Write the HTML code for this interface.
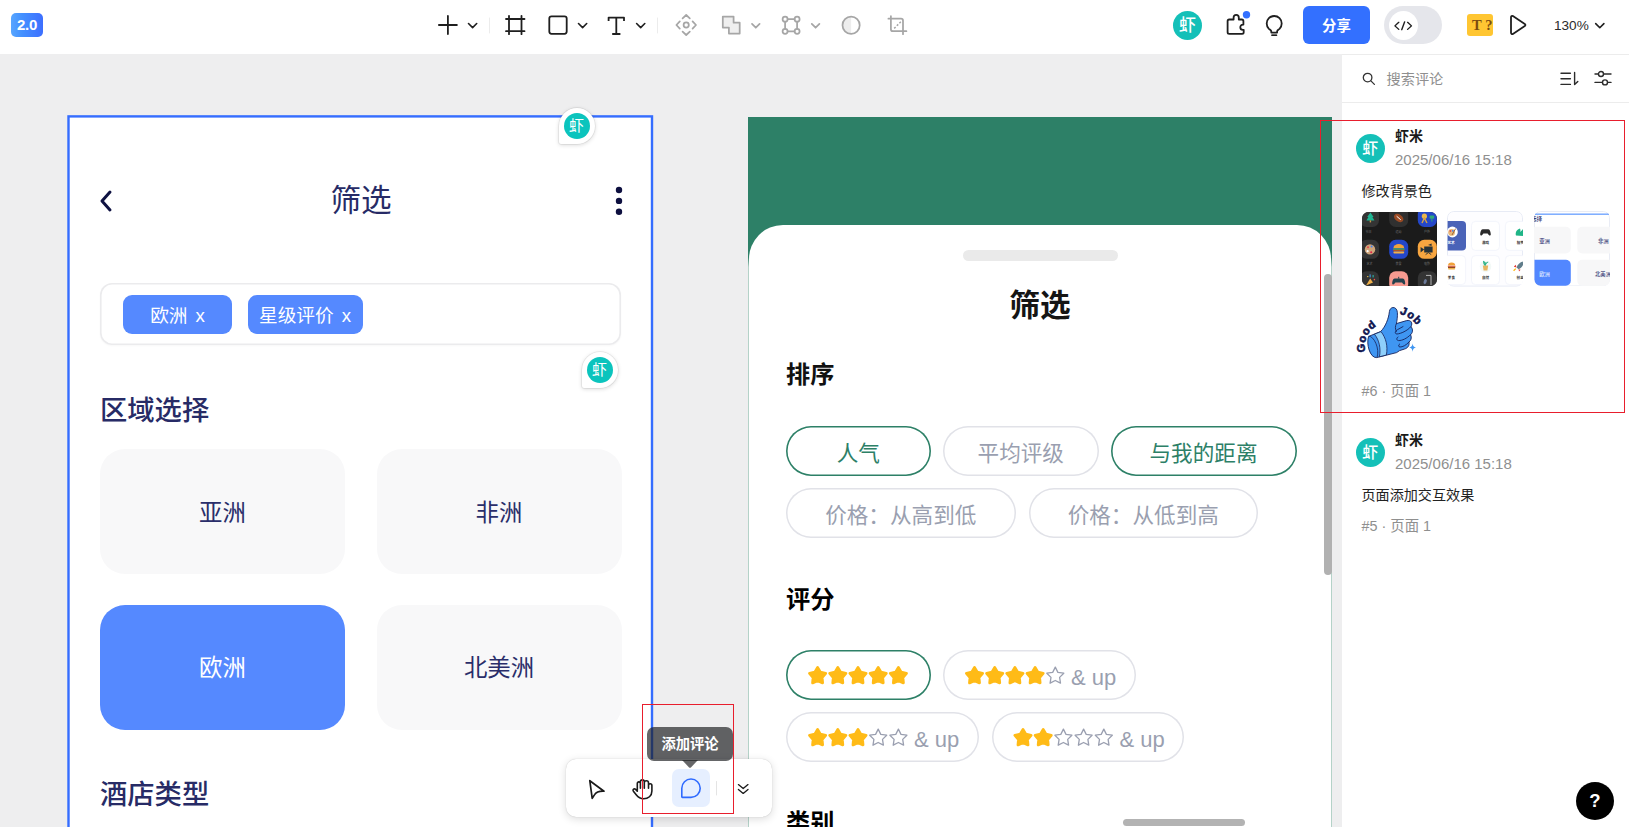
<!DOCTYPE html>
<html lang="zh-CN">
<head>
<meta charset="utf-8">
<title>筛选 - 评论</title>
<style>
*{box-sizing:border-box;margin:0;padding:0}
html,body{width:1629px;height:827px;overflow:hidden;background:#eeeeef}
body{position:relative;font-family:"Liberation Sans","Noto Sans CJK SC",sans-serif;color:#1f1f1f}
.abs{position:absolute}
.t{position:absolute;white-space:nowrap}
svg{position:absolute;overflow:visible}
/* top bar */
#topbar{position:absolute;left:0;top:0;width:1629px;height:54px;background:#fff}
#logo{position:absolute;left:11px;top:13px;width:32px;height:24px;border-radius:5px;background:linear-gradient(90deg,#58a6ff 0%,#4390ff 35%,#3d6fff 100%);color:#fff;font-weight:bold;font-size:15px;line-height:24px;text-align:center;letter-spacing:-0.3px}
/* frames */
#frameL{position:absolute;left:68px;top:116px;width:585px;height:740px;background:#fff}
#frameLb{position:absolute;left:67.5px;top:115.5px;width:586px;height:740px;border:2px solid #3370ff;pointer-events:none}
#frameR{position:absolute;left:748px;top:117px;width:584px;height:720px;background:linear-gradient(#2d8067 0,#2d8067 140px,#b4d2c8 150px,#b4d2c8 100%)}
#sheet{position:absolute;left:749px;top:225px;width:582px;height:620px;background:#fff;border-radius:34px 34px 0 0}
.navy{color:#272b66}
.card{position:absolute;width:245px;height:125px;border-radius:25px;background:#f8f8f9;color:#2a2e6a;font-size:23.4px;text-align:center;line-height:125px}
.card span{position:relative;top:1.5px}
.tag{position:absolute;top:295px;height:39px;border-radius:9px;background:#5589ff;color:#fff;font-size:18.7px;line-height:41px;text-align:center}
.pill{position:absolute;height:49.5px;border-radius:25px;box-shadow:inset 0 0 0 1.5px #e1e2e8;color:#9a9fb0;font-size:21.6px;text-align:center;line-height:49.5px;background:#fff}
.pill.on{box-shadow:inset 0 0 0 1.6px #2d8067;color:#2d8067}
.pill span{position:relative;top:3px}
.h2{position:absolute;left:786px;font-size:24.2px;font-weight:bold;color:#111;line-height:30px}
/* pins */
.pin{position:absolute;width:36px;height:36px;background:#fff;border-radius:18px 18px 18px 2px;box-shadow:0 0 0 .7px rgba(0,0,0,.07),0 1px 4px rgba(0,0,0,.16)}
.pin i{position:absolute;left:5px;top:4.7px;width:26.2px;height:26.2px;border-radius:50%;background:#0bc4bd;color:#fff;font-style:normal;font-size:15px;line-height:26px;text-align:center;font-weight:400}
/* panel */
#panel{position:absolute;left:1342px;top:54px;width:287px;height:773px;background:#fff;border-top:1px solid #ececec}
.av{position:absolute;width:29px;height:29px;border-radius:50%;background:#14c0b8;color:#fff;font-size:16px;font-weight:500;line-height:29px;text-align:center}
.name{font-size:14px;font-weight:bold;color:#1a1a1a;line-height:18px}
.date{font-size:15px;color:#8f8f8f;line-height:18px}
.body{font-size:14.1px;color:#222;line-height:18px}
.meta{font-size:14.4px;color:#8f8f8f;line-height:18px}
.red{position:absolute;border:1px solid #e81e2d}
</style>
</head>
<body>
<!-- TOPBAR -->
<div id="topbar"></div>
<div id="logo">2.0</div>

<svg id="tb" width="1629" height="54" viewBox="0 0 1629 54" style="left:0;top:0" fill="none" stroke-linecap="round" stroke-linejoin="round">
 <!-- plus -->
 <g stroke="#1f1f1f" stroke-width="1.8">
  <path d="M438.9 25H456.9M447.9 16V34"/>
  <path d="M468.5 23.5l4.1 4.1 4.1-4.1" stroke-width="1.6"/>
  <!-- frame -->
  <path d="M509 15.8V34.2M521.5 15.8V34.2M506 19H524.5M506 31.2H524.5"/>
  <!-- rect -->
  <rect x="549.3" y="16.4" width="17.4" height="17.4" rx="2.2"/>
  <path d="M578.5 23.5l4.1 4.1 4.1-4.1" stroke-width="1.6"/>
  <!-- T -->
  <path d="M608.6 21V17.6H624V21M616.3 17.6V34M612.2 34H620.4" stroke-linecap="butt"/>
  <path d="M636.6 23.5l4.1 4.1 4.1-4.1" stroke-width="1.6"/>
 </g>
 <path d="M489.5 18V33M657.5 18V33" stroke="#ececec" stroke-width="1"/>
 <!-- disabled icons -->
 <g stroke="#a6a6a6" stroke-width="1.75">
  <!-- component/move -->
  <circle cx="686.2" cy="25" r="2.6"/>
  <path d="M682.6 18.4l3.6-3.4 3.6 3.4M682.6 31.6l3.6 3.4 3.6-3.4M679.8 21.4l-3.4 3.6 3.4 3.6M692.6 21.4l3.4 3.6-3.4 3.6"/>
  <!-- union -->
  <path d="M722.8 16.6H733.6V22.7H739.7V33.5H728.9V27.6H722.8Z" fill="#efefef"/>
  <path d="M752 23.9l3.8 3.8 3.8-3.8"/>
  <!-- bbox -->
  <path d="M785.1 21.8V28.8M797.1 21.8V28.8M787.7 19.2H794.5M787.7 31.3H794.5"/>
  <circle cx="785.1" cy="19.2" r="2.5"/><circle cx="797.1" cy="19.2" r="2.5"/><circle cx="785.1" cy="31.3" r="2.5"/><circle cx="797.1" cy="31.3" r="2.5"/>
  <path d="M811.8 23.9l3.8 3.8 3.8-3.8"/>
  <!-- half circle -->
  <path d="M851.1 16.6A8.6 8.6 0 0 0 851.1 33.8Z" fill="#ededed" stroke="none"/>
  <circle cx="851.1" cy="25.2" r="8.6"/>
  <!-- crop -->
  <path d="M888.4 18.7H901A2 2 0 0 1 903 20.7V34.2M890.9 16.2V29.2A2 2 0 0 0 892.9 31.2H906.4"/>
  <path d="M894.2 28.4L900.8 21.8" stroke-dasharray="2 1.7" stroke-width="1.5" stroke-linecap="butt"/>
 </g>
 <!-- puzzle -->
 <g stroke="#1f1f1f" stroke-width="1.8">
  <path d="M1229.2 19.5H1233.6V17.4A2.6 2.6 0 0 1 1238.8 17.4V19.5H1241.8Q1243.4 19.5 1243.4 21.1V24.6H1242.9A2.6 2.6 0 0 0 1242.9 29.8H1243.7V32.2Q1243.7 33.8 1242.1 33.8H1229.2Q1227.6 33.8 1227.6 32.2V21.1Q1227.6 19.5 1229.2 19.5Z"/>
  <!-- bulb -->
  <path d="M1271.3 32.6V31.6C1271.3 30.2 1270 29.8 1268.9 28.8A7.5 7.5 0 1 1 1279.5 28.8C1278.4 29.8 1277.1 30.2 1277.1 31.6V32.6Z"/>
  <path d="M1272 34.1H1276.4" stroke="#8a8a8a" stroke-width="1"/>
  <path d="M1271.8 35.3H1276.6" stroke-width="1.4"/>
  <!-- play -->
  <path d="M1511 17.2V32.8C1511 33.8 1512 34.4 1512.9 33.9L1524.8 26.1C1525.6 25.6 1525.6 24.4 1524.8 23.9L1512.9 16.1C1512 15.6 1511 16.2 1511 17.2Z"/>
  <path d="M1595.7 23.6l4.1 4.1 4.1-4.1" stroke-width="1.6"/>
 </g>
 <circle cx="1246.5" cy="14.7" r="3.7" fill="#3370ff"/>
</svg>
<div class="abs" style="left:1173px;top:11px;width:29px;height:29px;border-radius:50%;background:#14c0b8;color:#fff;font-weight:500;font-size:17px;line-height:29px;text-align:center">虾</div>
<div class="abs" style="left:1303px;top:6px;width:67px;height:38px;border-radius:6px;background:#3370ff;color:#fff;font-weight:bold;font-size:14.4px;line-height:38px;text-align:center"><span style="position:relative;top:0.5px">分享</span></div>
<div class="abs" style="left:1384px;top:6px;width:58px;height:38px;border-radius:19px;background:#e5e6eb"></div>
<div class="abs" style="left:1388.5px;top:11px;width:29px;height:29px;border-radius:50%;background:#fff"></div>
<svg width="18.4" height="9.6" viewBox="0 0 20 12" preserveAspectRatio="none" style="left:1393.8px;top:21px" fill="none" stroke="#1f1f1f" stroke-width="1.5" stroke-linecap="round" stroke-linejoin="round"><path d="M5.2 1.6L1 6l4.2 4.4M14.8 1.6L19 6l-4.2 4.4M11.6 1L8.4 11"/></svg>
<div class="abs" style="left:1467px;top:14px;width:26px;height:21.5px;border-radius:3px;background:#ffc632;color:#7a4b10;font-family:'Liberation Serif',serif;font-weight:bold;font-size:14.5px;line-height:23.5px;text-align:center;letter-spacing:3.5px;padding-left:5px">T?</div>
<div class="t" style="left:1554px;top:16px;font-size:13.6px;line-height:20px;color:#2b2b2b">130%</div>

<!-- LEFT FRAME -->
<div id="frameL"></div>

<svg width="14" height="24" viewBox="0 0 14 24" style="left:99px;top:188.5px" fill="none" stroke="#0f1242" stroke-width="3" stroke-linecap="round" stroke-linejoin="round"><path d="M11 3L3 12l8 9"/></svg>
<div class="t navy" style="left:261px;top:180px;width:200px;text-align:center;font-size:30.6px;line-height:41px">筛选</div>
<svg width="8" height="30" viewBox="0 0 8 30" style="left:615.2px;top:185.6px"><circle cx="4" cy="4" r="3.2" fill="#0d0f3f"/><circle cx="4" cy="14.9" r="3.2" fill="#0d0f3f"/><circle cx="4" cy="25.8" r="3.2" fill="#0d0f3f"/></svg>
<div class="abs" style="left:100px;top:283px;width:520.5px;height:61.5px;border-radius:12px;box-shadow:inset 0 0 0 1.6px #ebebed,0 1px 2px rgba(0,0,0,.03);background:#fff"></div>
<div class="tag" style="left:123px;width:109px">欧洲<span style="margin-left:8px">x</span></div>
<div class="tag" style="left:247.5px;width:115px">星级评价<span style="margin-left:8px">x</span></div>
<div class="t navy" style="left:100px;top:392.5px;font-size:27.3px;line-height:36px;font-weight:500">区域选择</div>
<div class="card" style="left:100px;top:449px"><span>亚洲</span></div>
<div class="card" style="left:376.5px;top:449px"><span>非洲</span></div>
<div class="card" style="left:100px;top:604.5px;background:#5589ff;color:#fff"><span>欧洲</span></div>
<div class="card" style="left:376.5px;top:604.5px"><span>北美洲</span></div>
<div class="t navy" style="left:100px;top:776.5px;font-size:27.3px;line-height:36px;font-weight:500">酒店类型</div>
<svg width="600" height="720" viewBox="60 110 600 720" style="left:60px;top:110px"><rect x="68.5" y="116.4" width="583.5" height="740" fill="none" stroke="#356dff" stroke-width="2.4"/></svg>
<div class="pin" style="left:558.5px;top:108px"><i>虾</i></div>
<div class="pin" style="left:581.5px;top:352.2px"><i>虾</i></div>
<!-- RIGHT FRAME -->
<div id="frameR"></div>
<div id="sheet"></div>

<div class="abs" style="left:963px;top:249.5px;width:155px;height:11px;border-radius:6px;background:#eaeaea"></div>
<div class="t" style="left:940px;top:285px;width:200px;text-align:center;font-size:30.6px;font-weight:bold;line-height:40px;color:#151515">筛选</div>
<div class="h2" style="top:359.5px">排序</div>
<div class="pill on" style="left:786px;top:426px;width:144.5px"><span>人气</span></div>
<div class="pill" style="left:943px;top:426px;width:155.5px"><span>平均评级</span></div>
<div class="pill on" style="left:1110.5px;top:426px;width:186px"><span>与我的距离</span></div>
<div class="pill" style="left:786px;top:488px;width:229.5px"><span>价格：从高到低</span></div>
<div class="pill" style="left:1028.5px;top:488px;width:229.5px"><span>价格：从低到高</span></div>
<div class="h2" style="top:584.5px;color:#000">评分</div>
<div class="pill on" style="left:786px;top:650px;width:144.5px"></div>
<div class="pill" style="left:943px;top:650px;width:192.5px"></div>
<div class="pill" style="left:786px;top:712px;width:192.5px"></div>
<div class="pill" style="left:991.5px;top:712px;width:192.5px"></div>
<svg width="1629" height="827" viewBox="0 0 1629 827" style="left:0;top:0">
<polygon points="817.6,667.5 820.4,672.2 825.7,673.4 822.1,677.5 822.6,682.9 817.6,680.7 812.6,682.9 813.1,677.5 809.5,673.4 814.8,672.2" fill="#ffbb17" stroke="#ffbb17" stroke-width="2.8" stroke-linejoin="round"/><polygon points="837.8,667.5 840.6,672.2 845.9,673.4 842.3,677.5 842.8,682.9 837.8,680.7 832.8,682.9 833.3,677.5 829.7,673.4 835.0,672.2" fill="#ffbb17" stroke="#ffbb17" stroke-width="2.8" stroke-linejoin="round"/><polygon points="858.0,667.5 860.8,672.2 866.1,673.4 862.5,677.5 863.0,682.9 858.0,680.7 853.0,682.9 853.5,677.5 849.9,673.4 855.2,672.2" fill="#ffbb17" stroke="#ffbb17" stroke-width="2.8" stroke-linejoin="round"/><polygon points="878.2,667.5 881.0,672.2 886.3,673.4 882.7,677.5 883.2,682.9 878.2,680.7 873.2,682.9 873.7,677.5 870.1,673.4 875.4,672.2" fill="#ffbb17" stroke="#ffbb17" stroke-width="2.8" stroke-linejoin="round"/><polygon points="898.4,667.5 901.2,672.2 906.5,673.4 902.9,677.5 903.4,682.9 898.4,680.7 893.4,682.9 893.9,677.5 890.3,673.4 895.6,672.2" fill="#ffbb17" stroke="#ffbb17" stroke-width="2.8" stroke-linejoin="round"/><polygon points="974.5,667.5 977.3,672.2 982.6,673.4 979.0,677.5 979.5,682.9 974.5,680.7 969.5,682.9 970.0,677.5 966.4,673.4 971.7,672.2" fill="#ffbb17" stroke="#ffbb17" stroke-width="2.8" stroke-linejoin="round"/><polygon points="994.7,667.5 997.5,672.2 1002.8,673.4 999.2,677.5 999.7,682.9 994.7,680.7 989.7,682.9 990.2,677.5 986.6,673.4 991.9,672.2" fill="#ffbb17" stroke="#ffbb17" stroke-width="2.8" stroke-linejoin="round"/><polygon points="1014.9,667.5 1017.7,672.2 1023.0,673.4 1019.4,677.5 1019.9,682.9 1014.9,680.7 1009.9,682.9 1010.4,677.5 1006.8,673.4 1012.1,672.2" fill="#ffbb17" stroke="#ffbb17" stroke-width="2.8" stroke-linejoin="round"/><polygon points="1035.1,667.5 1037.9,672.2 1043.2,673.4 1039.6,677.5 1040.1,682.9 1035.1,680.7 1030.1,682.9 1030.6,677.5 1027.0,673.4 1032.3,672.2" fill="#ffbb17" stroke="#ffbb17" stroke-width="2.8" stroke-linejoin="round"/><polygon points="1055.3,667.1 1057.9,672.4 1063.8,673.2 1059.6,677.4 1060.5,683.2 1055.3,680.5 1050.1,683.2 1051.0,677.4 1046.8,673.2 1052.7,672.4" fill="none" stroke="#9a9fb0" stroke-width="1.3" stroke-linejoin="round"/><polygon points="817.6,729.5 820.4,734.2 825.7,735.4 822.1,739.5 822.6,744.9 817.6,742.7 812.6,744.9 813.1,739.5 809.5,735.4 814.8,734.2" fill="#ffbb17" stroke="#ffbb17" stroke-width="2.8" stroke-linejoin="round"/><polygon points="837.8,729.5 840.6,734.2 845.9,735.4 842.3,739.5 842.8,744.9 837.8,742.7 832.8,744.9 833.3,739.5 829.7,735.4 835.0,734.2" fill="#ffbb17" stroke="#ffbb17" stroke-width="2.8" stroke-linejoin="round"/><polygon points="858.0,729.5 860.8,734.2 866.1,735.4 862.5,739.5 863.0,744.9 858.0,742.7 853.0,744.9 853.5,739.5 849.9,735.4 855.2,734.2" fill="#ffbb17" stroke="#ffbb17" stroke-width="2.8" stroke-linejoin="round"/><polygon points="878.2,729.1 880.8,734.4 886.7,735.2 882.5,739.4 883.4,745.2 878.2,742.5 873.0,745.2 873.9,739.4 869.7,735.2 875.6,734.4" fill="none" stroke="#9a9fb0" stroke-width="1.3" stroke-linejoin="round"/><polygon points="898.4,729.1 901.0,734.4 906.9,735.2 902.7,739.4 903.6,745.2 898.4,742.5 893.2,745.2 894.1,739.4 889.9,735.2 895.8,734.4" fill="none" stroke="#9a9fb0" stroke-width="1.3" stroke-linejoin="round"/><polygon points="1023.0,729.5 1025.8,734.2 1031.1,735.4 1027.5,739.5 1028.0,744.9 1023.0,742.7 1018.0,744.9 1018.5,739.5 1014.9,735.4 1020.2,734.2" fill="#ffbb17" stroke="#ffbb17" stroke-width="2.8" stroke-linejoin="round"/><polygon points="1043.2,729.5 1046.0,734.2 1051.3,735.4 1047.7,739.5 1048.2,744.9 1043.2,742.7 1038.2,744.9 1038.7,739.5 1035.1,735.4 1040.4,734.2" fill="#ffbb17" stroke="#ffbb17" stroke-width="2.8" stroke-linejoin="round"/><polygon points="1063.4,729.1 1066.0,734.4 1071.9,735.2 1067.7,739.4 1068.6,745.2 1063.4,742.5 1058.2,745.2 1059.1,739.4 1054.9,735.2 1060.8,734.4" fill="none" stroke="#9a9fb0" stroke-width="1.3" stroke-linejoin="round"/><polygon points="1083.6,729.1 1086.2,734.4 1092.1,735.2 1087.9,739.4 1088.8,745.2 1083.6,742.5 1078.4,745.2 1079.3,739.4 1075.1,735.2 1081.0,734.4" fill="none" stroke="#9a9fb0" stroke-width="1.3" stroke-linejoin="round"/><polygon points="1103.8,729.1 1106.4,734.4 1112.3,735.2 1108.1,739.4 1109.0,745.2 1103.8,742.5 1098.6,745.2 1099.5,739.4 1095.3,735.2 1101.2,734.4" fill="none" stroke="#9a9fb0" stroke-width="1.3" stroke-linejoin="round"/>
</svg>
<div class="t" style="left:1071px;top:663px;font-size:22px;line-height:30px;color:#9a9fb0">&amp; up</div>
<div class="t" style="left:914px;top:725px;font-size:22px;line-height:30px;color:#9a9fb0">&amp; up</div>
<div class="t" style="left:1119.5px;top:725px;font-size:22px;line-height:30px;color:#9a9fb0">&amp; up</div>
<div class="h2" style="top:808px;color:#000">类别</div>
<div class="abs" style="left:1324px;top:273.5px;width:8px;height:301px;border-radius:4px;background:#b1b1b1"></div>
<div class="abs" style="left:1122.5px;top:819px;width:122.5px;height:7px;border-radius:4px;background:#b3b3b3"></div>

<!-- PANEL -->
<div id="panel"></div>

<div class="abs" style="left:1342px;top:102px;width:287px;height:1px;background:#ececec"></div>
<svg width="14" height="14" viewBox="0 0 14 14" style="left:1362px;top:71.6px" fill="none" stroke="#333" stroke-width="1.3" stroke-linecap="round"><circle cx="5.6" cy="5.6" r="4.3"/><path d="M8.9 8.9L12.4 12.4"/></svg>
<div class="t" style="left:1386.5px;top:69.5px;font-size:14.2px;line-height:18px;color:#8f8f8f">搜索评论</div>
<svg width="20" height="16" viewBox="0 0 20 16" style="left:1559.5px;top:70.5px" fill="none" stroke="#2b2b2b" stroke-width="1.4" stroke-linecap="round" stroke-linejoin="round"><path d="M1 2.2H10.4M1 7.8H10.4M1 13.4H10.4M14.6 1.4V13.6L17.8 10.4"/></svg>
<svg width="18" height="16" viewBox="0 0 18 16" style="left:1593.5px;top:70px" fill="none" stroke="#2b2b2b" stroke-width="1.4" stroke-linecap="round"><path d="M1 4H4.4M9.6 4H17M1 12.4H8.4M13.6 12.4H17"/><circle cx="7" cy="4" r="2.5"/><circle cx="11" cy="12.4" r="2.5"/></svg>

<div class="av" style="left:1356px;top:134px"><span style="position:relative;left:-0.3px">虾</span></div>
<div class="t name" style="left:1395px;top:127px">虾米</div>
<div class="t date" style="left:1395px;top:151px">2025/06/16 15:18</div>
<div class="t body" style="left:1361.5px;top:181.5px">修改背景色</div>

<svg width="75" height="74.5" viewBox="0 0 75 74.5" style="left:1362px;top:211.6px;overflow:hidden;border-radius:6.5px">
 <rect width="75" height="74.5" fill="#1b1b1b"/>
 <g>
  <rect x="-2" y="-4" width="19" height="19" rx="6.5" fill="#343434"/>
  <rect x="27.2" y="-4" width="19" height="19" rx="6.5" fill="#303030"/>
  <rect x="55.8" y="-4" width="19" height="19" rx="6.5" fill="#2447c9"/>
  <rect x="-2" y="27.8" width="19" height="19" rx="6.5" fill="#343434"/>
  <rect x="27.2" y="27.8" width="19" height="19" rx="6.5" fill="#2447c9"/>
  <rect x="55.8" y="27.8" width="19" height="19" rx="6.5" fill="#f8a640"/>
  <rect x="-2" y="59.3" width="19" height="19" rx="6.5" fill="#343434"/>
  <rect x="27.2" y="59.3" width="19" height="19" rx="6.5" fill="#f79a90"/>
  <rect x="55.8" y="59.3" width="19" height="19" rx="6.5" fill="#343434"/>
 </g>
 <!-- tree -->
 <path d="M8.4 0.5L11.6 5H10.4L12.4 8.4H4.4L6.4 5H5.2Z" fill="#1fb592"/><rect x="7.7" y="8.4" width="1.4" height="2" fill="#c89a4a"/>
 <!-- football -->
 <ellipse cx="36.7" cy="6" rx="5.2" ry="3.5" transform="rotate(35 36.7 6)" fill="#9a4a24"/><path d="M34.6 4.2L38.8 7.8" stroke="#fff" stroke-width="1"/>
 <!-- trophy people -->
 <circle cx="62.4" cy="4.2" r="2.6" fill="#e9b64f"/><path d="M60 11l2.4-5 2.6 5" stroke="#d9a441" stroke-width="1.4" fill="none"/><rect x="67.6" y="3.4" width="4.6" height="3.4" rx="1" fill="#2fa979"/><rect x="69.4" y="6.6" width="1" height="3" fill="#2fa979"/>
 <!-- palette -->
 <circle cx="8" cy="37.4" r="5.2" fill="#cfa57a"/><circle cx="6" cy="35.2" r="1" fill="#e5484d"/><circle cx="9.6" cy="34.6" r="1" fill="#3b82f6"/><circle cx="5.6" cy="39.2" r="1.1" fill="#fff"/><circle cx="9.2" cy="40.2" r="1" fill="#e11d48"/>
 <!-- burger -->
 <path d="M31.4 36.2A5.4 4.2 0 0 1 42.2 36.2Z" fill="#f0a23b"/><rect x="31" y="36.4" width="11.6" height="1.5" fill="#3ea55c"/><rect x="31.2" y="37.8" width="11.2" height="1.6" fill="#b4531f"/><rect x="31.4" y="39.4" width="10.8" height="2.2" rx="1" fill="#f0b04b"/>
 <!-- camera -->
 <path d="M62.2 34.4H70.6V40.6H62.2ZM62.2 37.4L58.6 35V40.4ZM66 33L69.6 31.4V34" fill="#263238"/><path d="M63.6 42.6L66.4 40.6L69.2 42.6" stroke="#263238" stroke-width="0.9" fill="none"/>
 <!-- party -->
 <path d="M4 73.5L8.2 66.4L11 70.4Z" fill="#f0b14a"/><rect x="7.6" y="62.4" width="1" height="3" fill="#4aa3ff"/><rect x="10.6" y="63" width="1" height="2.4" fill="#27c4b2"/><circle cx="12.4" cy="67.6" r="0.8" fill="#ef5350"/><circle cx="5.8" cy="64.6" r="0.7" fill="#ffd54f"/>
 <!-- gamepad -->
 <path d="M32.6 66.4H40.8C42.4 66.4 43.2 69.4 43.2 71.4C43.2 72.6 41.8 72.8 41 71.8L40 70.6H33.4L32.4 71.8C31.6 72.8 30.2 72.6 30.2 71.4C30.2 69.4 31 66.4 32.6 66.4Z" fill="#24414d"/><rect x="36.2" y="64.8" width="1" height="1.8" fill="#24414d"/>
 <!-- mic -->
 <ellipse cx="63.2" cy="69.6" rx="1.5" ry="2.6" transform="rotate(20 63.2 69.6)" fill="#6b7a99"/><path d="M64 63.4H69V73" stroke="#d8d8d8" stroke-width="0.8" fill="none"/>
 <g font-size="3" fill="#6f6f6f" text-anchor="middle" font-family="'Liberation Sans','Noto Sans CJK SC',sans-serif">
  <text x="6.6" y="21.4">节日</text><text x="36.6" y="21.4">运动</text><text x="65" y="21.4">户外</text>
  <text x="7.6" y="52.6">艺术</text><text x="36.6" y="52.6">美食</text><text x="65" y="52.6">电影</text>
 </g>
</svg>

<svg width="76" height="75.6" viewBox="0 0 76 75.6" style="left:1447.3px;top:211px;overflow:hidden;border-radius:6.5px">
 <rect x="0.5" y="0.5" width="75" height="74.6" rx="6" fill="#fdfdff" stroke="#e7ebf5"/>
 <g fill="#fff" stroke="#f0f3fa" stroke-width="0.8">
  <rect x="24.5" y="10.4" width="28" height="29" rx="4"/>
  <rect x="58.4" y="10.4" width="28" height="29" rx="4"/>
  <rect x="-10" y="44.6" width="28.6" height="29" rx="4"/>
  <rect x="24.5" y="44.6" width="28" height="29" rx="4"/>
  <rect x="58.4" y="44.6" width="28" height="29" rx="4"/>
 </g>
 <path d="M0.6 10H15A4 4 0 0 1 19 14V35.6A4 4 0 0 1 15 39.6H0.6Z" fill="#4a63b8"/>
 <circle cx="5.4" cy="21" r="5.4" fill="#fff"/>
 <circle cx="4.6" cy="21.4" r="3.4" fill="#e7b77b"/><circle cx="3.4" cy="20" r="0.9" fill="#e5484d"/><circle cx="5.8" cy="19.8" r="0.9" fill="#3b82f6"/><path d="M5 24L8.6 17.6" stroke="#8d5a2b" stroke-width="0.9"/>
 <!-- gamepad -->
 <path d="M35.6 18.2H41.4C43 18.2 43.8 21.6 43.8 23.6C43.8 24.8 42.6 24.8 41.8 24L40.6 22.4H36.4L35.2 24C34.4 24.8 33.2 24.8 33.2 23.6C33.2 21.6 34 18.2 35.6 18.2Z" fill="#2b2b2b"/>
 <!-- leaf -->
 <path d="M69 24.6C68 21 70 18.2 73 17.4C73.6 19 73.6 20 73.2 21C74.4 20 75.4 19 76 18V25Z" fill="#1fb587"/>
 <!-- burger -->
 <path d="M1 54.6A3.6 3 0 0 1 8.2 54.6Z" fill="#f0a23b"/><rect x="0.8" y="54.8" width="7.6" height="1" fill="#e04f3d"/><rect x="1" y="55.8" width="7.2" height="1.2" fill="#8d4a1f"/><rect x="1" y="57" width="7.2" height="1.6" rx="0.8" fill="#f0b04b"/>
 <!-- plant cup -->
 <circle cx="38.5" cy="55.4" r="5.8" fill="#f3f9f7"/>
 <path d="M35.8 54.6H41.2L40.4 59.6H36.6Z" fill="#e7b45f"/><path d="M38.4 54.6C37 53 36.4 52 36.6 50.6C38 51 38.6 52 38.6 53.2C39.4 51.8 40.2 51 41.2 51" stroke="#33b58a" stroke-width="1.2" fill="none"/>
 <!-- rocket -->
 <path d="M75.8 50.6C73 51.4 70.6 53.6 69.6 56.4L71.6 58.2C74 57.2 75.6 55.6 76.4 53Z" fill="#607d8b"/><path d="M69.6 56.4L66.8 55.8L68.6 53.8ZM71.6 58.2L72 60.6L73.6 58.8Z" fill="#e53935"/><path d="M68.8 57.6L66.6 59.8" stroke="#ffb300" stroke-width="1.2"/>
 <g font-size="3.6" text-anchor="middle" font-family="'Liberation Sans','Noto Sans CJK SC',sans-serif" font-weight="bold">
  <text x="4" y="32.8" fill="#fff">艺术</text><text x="38.5" y="32.8" fill="#333">游戏</text><text x="73.4" y="32.8" fill="#333">植物</text>
  <text x="4.4" y="67.6" fill="#333">美食</text><text x="38.5" y="67.6" fill="#333">自然</text><text x="73.2" y="67.6" fill="#333">创意</text>
 </g>
</svg>

<svg width="76" height="75.4" viewBox="0 0 76 75.4" style="left:1533.6px;top:211px;overflow:hidden;border-radius:6.5px">
 <rect x="0.5" y="0.5" width="75" height="74.4" rx="6" fill="#fff" stroke="#e9ecf5"/>
 <rect x="1" y="2.6" width="74" height="1.1" fill="#4c8dff"/>
 <rect x="-3" y="15.8" width="39.8" height="26.6" rx="5" fill="#f7f7f8"/>
 <rect x="43.3" y="15.8" width="39.8" height="26.6" rx="5" fill="#f7f7f8"/>
 <rect x="43.3" y="48.8" width="39.8" height="26" rx="5" fill="#f7f7f8"/>
 <path d="M0.5 48.8H31.8A5 5 0 0 1 36.8 53.8V69.8A5 5 0 0 1 31.8 74.8H6.5A6 6 0 0 1 0.5 68.8Z" fill="#5287ff"/>
 <g font-family="'Liberation Sans','Noto Sans CJK SC',sans-serif" font-weight="500" fill="#3a3e78">
  <text x="-3" y="10.4" font-size="5.6">选择</text>
  <text x="5.2" y="31.8" font-size="5.4">亚洲</text>
  <text x="64" y="31.8" font-size="5.4">非洲</text>
  <text x="5.2" y="64.6" font-size="5.4" fill="#dbe6ff">欧洲</text>
  <text x="61" y="64.6" font-size="5.4">北美洲</text>
 </g>
</svg>

<svg width="80" height="66" viewBox="1350 298 80 66" style="left:1350px;top:298px">
 <defs>
  <path id="arcGood" d="M1365.4 352.4C1363 340.6 1367.2 329.8 1380.8 323.8"/>
  <path id="arcJob" d="M1399.6 313.6C1406 315.4 1413 319.6 1418 326.6"/>
 </defs>
 <!-- white sticker outline -->
 <g fill="#fff" stroke="#fff" stroke-width="9" stroke-linejoin="round" stroke-linecap="round">
  <path d="M1368.6 336.4L1380.6 331.6C1385.6 326.6 1388.6 318.6 1389.4 311.6C1390 306 1397 306 1397.4 312.6C1397.6 317 1397 320.6 1396.4 323.6L1406.6 320.6C1411 319.6 1413 323 1411 326.6C1413.4 329.6 1412.6 333 1410.6 334.6C1412 338 1411 340.6 1409 342C1409.6 345.4 1408 348 1404.6 349L1399.6 350.6L1396.6 352.6L1376.6 357.6C1370 358 1366 344 1368.6 336.4Z"/>
  <path d="M1365.4 352.4C1363 340.6 1367.2 329.8 1380.8 323.8" fill="none" stroke-width="14"/>
  <path d="M1399.6 313.6C1406 315.4 1413 319.6 1418 326.6" fill="none" stroke-width="14"/>
  <circle cx="1412.6" cy="347.6" r="3"/>
 </g>
 <!-- hand -->
 <path d="M1368.6 336.4L1380.6 331.6C1385.6 326.6 1388.6 318.6 1389.4 311.6C1390 306 1397 306 1397.4 312.6C1397.6 317 1397 320.6 1396.4 323.6L1406.6 320.6C1411 319.6 1413 323 1411 326.6C1413.4 329.6 1412.6 333 1410.6 334.6C1412 338 1411 340.6 1409 342C1409.6 345.4 1408 348 1404.6 349L1399.6 350.6L1396.6 352.6L1376.6 357.6C1370 358 1366 344 1368.6 336.4Z" fill="#3f96f2" stroke="#15235c" stroke-width="0.9" stroke-linejoin="round"/>
 <path d="M1374.4 334.2L1381 331.6C1386 338 1388 346 1386.4 355L1379.4 356.8C1381 349 1379.4 340 1374.4 334.2Z" fill="#8fd0fb" stroke="#15235c" stroke-width="0.8" stroke-linejoin="round"/>
 <path d="M1368.8 336.2C1374 336 1380 349 1377 357.4" fill="none" stroke="#15235c" stroke-width="0.8"/>
 <path d="M1396.4 323.6C1395 326 1395 329 1396.4 331.4M1411 326.6C1407 331 1401 333.6 1397 334C1394.6 334 1394.6 331 1397.6 329.6L1403 326.6M1410.6 334.6C1407 338.6 1402 340.6 1398.6 340.6C1396.6 340.6 1396 338 1398 337M1409 342C1406 345.4 1402.6 347 1400 347C1398.4 347 1398 345 1399.6 344" fill="none" stroke="#15235c" stroke-width="0.9" stroke-linecap="round"/>
 <path d="M1412.6 343.4C1413 346 1413.6 346.8 1416 347.6C1413.6 348.2 1413 349 1412.6 351.8C1412.2 349 1411.6 348.2 1409.2 347.6C1411.6 346.8 1412.2 346 1412.6 343.4Z" fill="#3f96f2"/>
 <g font-family="'Liberation Sans',sans-serif" font-weight="bold" font-size="11" fill="#0f1550" stroke="#0f1550" stroke-width="0.6">
  <text letter-spacing="0.6"><textPath href="#arcGood" startOffset="0">Good</textPath></text>
  <text letter-spacing="0.8"><textPath href="#arcJob" startOffset="0">Job</textPath></text>
 </g>
</svg>
<div class="t meta" style="left:1361.5px;top:382px">#6 · 页面 1</div>

<div class="av" style="left:1356px;top:438px"><span style="position:relative;left:-0.3px">虾</span></div>
<div class="t name" style="left:1395px;top:431px">虾米</div>
<div class="t date" style="left:1395px;top:455px">2025/06/16 15:18</div>
<div class="t body" style="left:1361.5px;top:485.5px">页面添加交互效果</div>
<div class="t meta" style="left:1361.5px;top:517px">#5 · 页面 1</div>

<div class="abs" style="left:1576px;top:782px;width:38px;height:38px;border-radius:50%;background:#000;color:#fff;font-weight:bold;font-size:18.5px;line-height:38px;text-align:center">?</div>

<!-- floating toolbar -->
<div class="abs" style="left:566px;top:758.5px;width:206px;height:58.5px;border-radius:10px;background:#fff;box-shadow:0 2px 8px rgba(0,0,0,.14),0 0 1px rgba(0,0,0,.25)"></div>
<div class="abs" style="left:672px;top:769px;width:38px;height:38px;border-radius:7px;background:#e6efff"></div>
<svg width="206" height="59" viewBox="566 758 206 59" style="left:566px;top:758px" fill="none" stroke-linecap="round" stroke-linejoin="round">
 <path d="M589.8 780.7L604 791.2C599 791 596 792.2 594.6 794.6L592.2 798.4Z" stroke="#1a1a1a" stroke-width="1.7"/>
 <g stroke="#1a1a1a" stroke-width="1.6">
  <path d="M637.3 790.6V783.4A1.55 1.55 0 0 1 640.4 783.4V788.2M640.4 783.6V781.8A1.95 1.95 0 0 1 644.3 781.8V788.2M644.3 782.8A2.1 2.1 0 0 1 648.5 782.8V788.2M648.5 785.4A1.7 1.7 0 0 1 651.9 785.4V791C651.9 796 648.2 798.8 643.6 798.8C640.2 798.8 638.2 797.4 636.4 795L633.4 791.2C632.2 789.6 634.2 788 635.6 789.4L637.3 791.2"/>
 </g>
 <path d="M681.8 796.8V788.2A9.2 9.2 0 1 1 691 797.4H682.4A0.6 0.6 0 0 1 681.8 796.8Z" stroke="#2f6bff" stroke-width="1.6"/>
 <path d="M716.5 781.5V795" stroke="#e4e4e4" stroke-width="1"/>
 <path d="M738.4 784.6L743.2 788.6L748 784.6M738.4 789.4L743.2 793.4L748 789.4" stroke="#1a1a1a" stroke-width="1.3"/>
</svg>
<!-- tooltip -->
<div class="abs" style="left:647px;top:727px;width:86px;height:33.5px;border-radius:7px;background:rgba(28,29,33,.68);color:#fff;font-weight:bold;font-size:14.3px;line-height:33px;text-align:center"><span style="position:relative;top:0.5px">添加评论</span></div>
<svg width="18" height="9" viewBox="0 0 18 9" style="left:681.2px;top:760.3px"><path d="M1 0H17L9.9 7.4Q9 8.3 8.1 7.4Z" fill="rgba(28,29,33,.68)"/></svg>
<!-- annotation rects -->
<div class="red" style="left:1320px;top:120px;width:305px;height:293px"></div>
<div class="red" style="left:642px;top:704px;width:92px;height:110px"></div>

</body>
</html>
